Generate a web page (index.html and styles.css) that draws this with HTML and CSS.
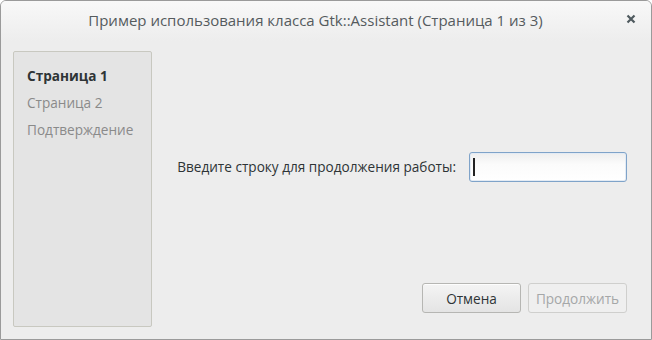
FILE: index.html
```html
<!DOCTYPE html>
<html lang="ru">
<head>
  <meta charset="UTF-8">
  <title>Gtk::Assistant</title>
  <link rel="stylesheet" href="styles.css">
</head>
<body>
  <div class="window">
    <div class="titlebar">
      <span class="title">Пример использования класса Gtk::Assistant (Страница 1 из 3)</span>
      <span class="close">
        <svg width="10" height="10" viewBox="0 0 10 10">
          <path d="M1.5 1.5 L8.5 8.5 M8.5 1.5 L1.5 8.5" stroke="#4f5a5f" stroke-width="2.2"/>
        </svg>
      </span>
    </div>
    <div class="content">
      <div class="sidebar">
        <div class="step current">Страница 1</div>
        <div class="step">Страница 2</div>
        <div class="step">Подтверждение</div>
      </div>
      <div class="main">
        <div class="page">
          <label class="label" for="entry">Введите строку для продолжения работы:</label>
          <div class="entry"><span class="caret"></span></div>
        </div>
        <div class="actions">
          <button class="btn">Отмена</button>
          <button class="btn" disabled>Продолжить</button>
        </div>
      </div>
    </div>
  </div>
</body>
</html>
```

FILE: styles.css
```css
html, body {
    margin: 0;
    padding: 0;
    background: #ffffff;
}

body {
    font-family: "Open Sans", "DejaVu Sans", sans-serif;
    font-size: 13.6px;
    color: #2e3436;
}

.window {
    width: 650px;
    height: 338px;
    border: 1px solid #9a9a9a;
    border-radius: 6px 6px 0 0;
    background: #ededed;
    display: flex;
    flex-direction: column;
    overflow: hidden;
}

.titlebar {
    height: 40px;
    flex-shrink: 0;
    display: flex;
    align-items: center;
    justify-content: center;
    position: relative;
    background: linear-gradient(#f8f8f8, #ededed);
}

.title {
    font-size: 15px;
    color: #555b5e;
    margin-top: -3px;
    margin-right: 21px;
}

.close {
    position: absolute;
    right: 15px;
    top: 13px;
    width: 10px;
    height: 10px;
}

.close svg {
    display: block;
}

.content {
    flex: 1;
    display: flex;
    padding: 10px 24px 12px 12px;
}

.sidebar {
    width: 139px;
    border: 1px solid #c8c8c0;
    border-radius: 2px;
    background: #e4e4e4;
    padding: 14px 0 0 13px;
    box-sizing: border-box;
}

.step {
    height: 27px;
    line-height: 20px;
    color: #8a8a8a;
}

.step.current {
    color: #2e3436;
    font-weight: bold;
}

.main {
    flex: 1;
    display: flex;
    flex-direction: column;
}

.page {
    flex: 1;
    display: flex;
    align-items: center;
    justify-content: flex-end;
    padding-bottom: 1px;
}

.label {
    margin-right: 13px;
}

.entry {
    width: 153px;
    height: 28px;
    border: 1px solid #7fa3c9;
    border-radius: 3px;
    background: linear-gradient(#eeeeee, #fbfbfb 40%, #ffffff);
    box-shadow: inset 0 0 0 1px #e3ebf4;
    display: flex;
    align-items: center;
    padding-left: 3px;
}

.caret {
    width: 2px;
    height: 18px;
    background: #222222;
}

.actions {
    display: flex;
    justify-content: flex-end;
    gap: 7px;
    margin-bottom: 14px;
}

.btn {
    width: 99px;
    height: 30px;
    font-family: inherit;
    font-size: 13.6px;
    color: #2e3436;
    border: 1px solid #b6b6b3;
    border-radius: 3px;
    background: linear-gradient(#f4f4f4, #e4e4e4);
    box-shadow: 0 1px 0 rgba(255, 255, 255, 0.8) inset;
    padding: 0;
}

.btn:disabled {
    color: #a5a7a8;
    border-color: #cfcfcd;
    background: #efefef;
    box-shadow: none;
}
```
